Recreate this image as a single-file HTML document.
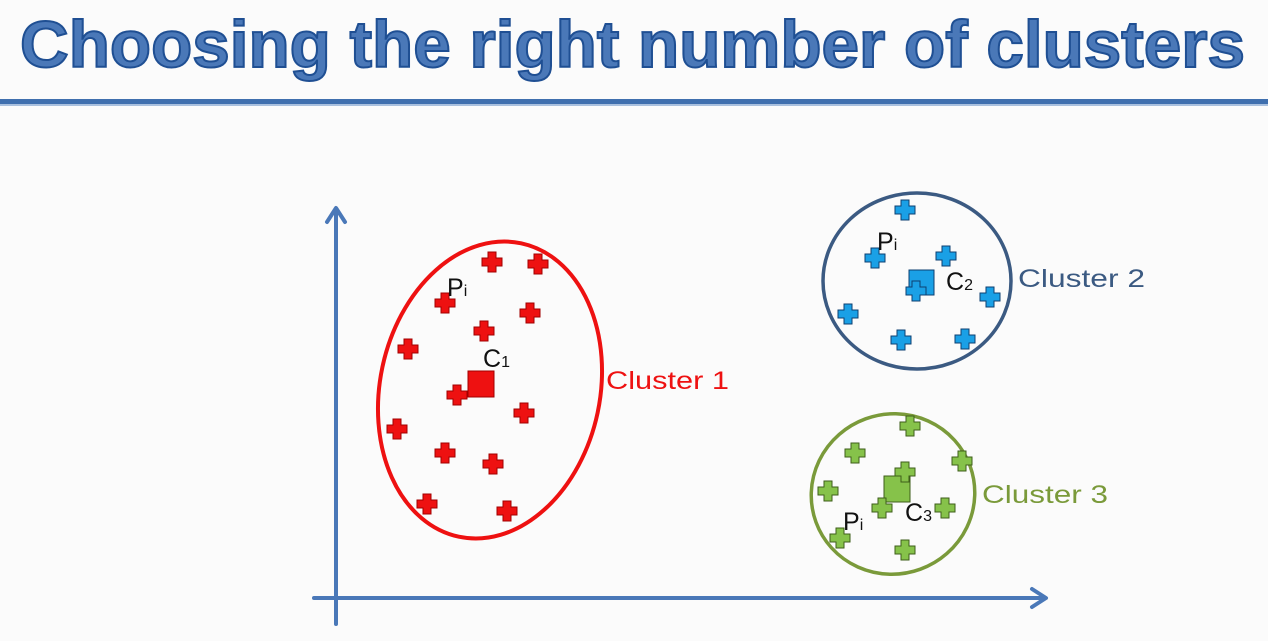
<!DOCTYPE html>
<html><head><meta charset="utf-8"><style>
html,body{margin:0;padding:0;background:#fbfbfb;}
svg{display:block;}
</style></head><body>
<svg width="1268" height="641" viewBox="0 0 1268 641" xmlns="http://www.w3.org/2000/svg" font-family="'Liberation Sans', sans-serif">
<defs>
<path id="cr" d="M-4,-10 H4 V-4 H10 V4 H4 V10 H-4 V4 H-10 V-4 H-4 Z"/>
</defs>
<rect width="1268" height="641" fill="#fbfbfb"/>
<text x="20" y="67" font-size="66" font-weight="bold" fill="#4a78b8" stroke="#1f4f93" stroke-width="2" textLength="1225" lengthAdjust="spacingAndGlyphs">Choosing the right number of clusters</text>
<rect x="0" y="99" width="1268" height="5" fill="#3f6fae"/>
<rect x="0" y="104" width="1268" height="2" fill="#a9c0de"/>
<g stroke="#4a78b8" stroke-width="4" fill="none" stroke-linecap="round" stroke-linejoin="round">
<line x1="336" y1="210" x2="336" y2="624"/>
<polyline points="327,222 336,208 345,222"/>
<line x1="314" y1="598" x2="1044" y2="598"/>
<polyline points="1032,589 1046,598 1032,607"/>
</g>
<ellipse cx="490" cy="390" rx="110" ry="150" transform="rotate(12 490 390)" fill="none" stroke="#ee1111" stroke-width="4"/>
<g fill="#ee1111" stroke="#a10000" stroke-width="1">
<use href="#cr" x="492" y="262"/><use href="#cr" x="538" y="264"/><use href="#cr" x="445" y="303"/>
<use href="#cr" x="530" y="313"/><use href="#cr" x="484" y="331"/><use href="#cr" x="408" y="349"/>
<use href="#cr" x="457" y="395"/><use href="#cr" x="524" y="413"/><use href="#cr" x="397" y="429"/>
<use href="#cr" x="445" y="453"/><use href="#cr" x="493" y="464"/><use href="#cr" x="427" y="504"/>
<use href="#cr" x="507" y="511"/>
<rect x="468" y="371" width="26" height="26"/>
</g>
<text x="447" y="296" font-size="25" fill="#111">P<tspan font-size="16">i</tspan></text>
<text x="483" y="367" font-size="25" fill="#111">C<tspan font-size="16">1</tspan></text>
<text x="606" y="389" font-size="25" fill="#ee1111" textLength="123" lengthAdjust="spacingAndGlyphs">Cluster 1</text>
<ellipse cx="917" cy="281" rx="94" ry="88" fill="none" stroke="#3b5a82" stroke-width="3.5"/>
<g fill="#1aa0e6" stroke="#0d3f70" stroke-width="1">
<rect x="909" y="270" width="25" height="25"/>
<use href="#cr" x="905" y="210"/><use href="#cr" x="946" y="256"/><use href="#cr" x="875" y="258"/>
<use href="#cr" x="990" y="297"/><use href="#cr" x="848" y="314"/><use href="#cr" x="901" y="340"/>
<use href="#cr" x="965" y="339"/><use href="#cr" x="916" y="291"/>
</g>
<text x="877" y="250" font-size="25" fill="#111">P<tspan font-size="16">i</tspan></text>
<text x="946" y="290" font-size="25" fill="#111">C<tspan font-size="16">2</tspan></text>
<text x="1018" y="287" font-size="25" fill="#3b5a82" textLength="127" lengthAdjust="spacingAndGlyphs">Cluster 2</text>
<ellipse cx="893" cy="494" rx="82" ry="80" transform="rotate(-20 893 494)" fill="none" stroke="#7a9a3a" stroke-width="3.5"/>
<g fill="#86c24a" stroke="#3e5e1a" stroke-width="1">
<rect x="884" y="476" width="26" height="26"/>
<use href="#cr" x="910" y="426"/><use href="#cr" x="855" y="453"/><use href="#cr" x="962" y="461"/>
<use href="#cr" x="905" y="472"/><use href="#cr" x="828" y="491"/><use href="#cr" x="882" y="508"/>
<use href="#cr" x="945" y="508"/><use href="#cr" x="840" y="538"/><use href="#cr" x="905" y="550"/>
</g>
<text x="843" y="530" font-size="25" fill="#111">P<tspan font-size="16">i</tspan></text>
<text x="905" y="521" font-size="25" fill="#111">C<tspan font-size="16">3</tspan></text>
<text x="982" y="503" font-size="25" fill="#7a9a3a" textLength="126" lengthAdjust="spacingAndGlyphs">Cluster 3</text>
</svg>
</body></html>
